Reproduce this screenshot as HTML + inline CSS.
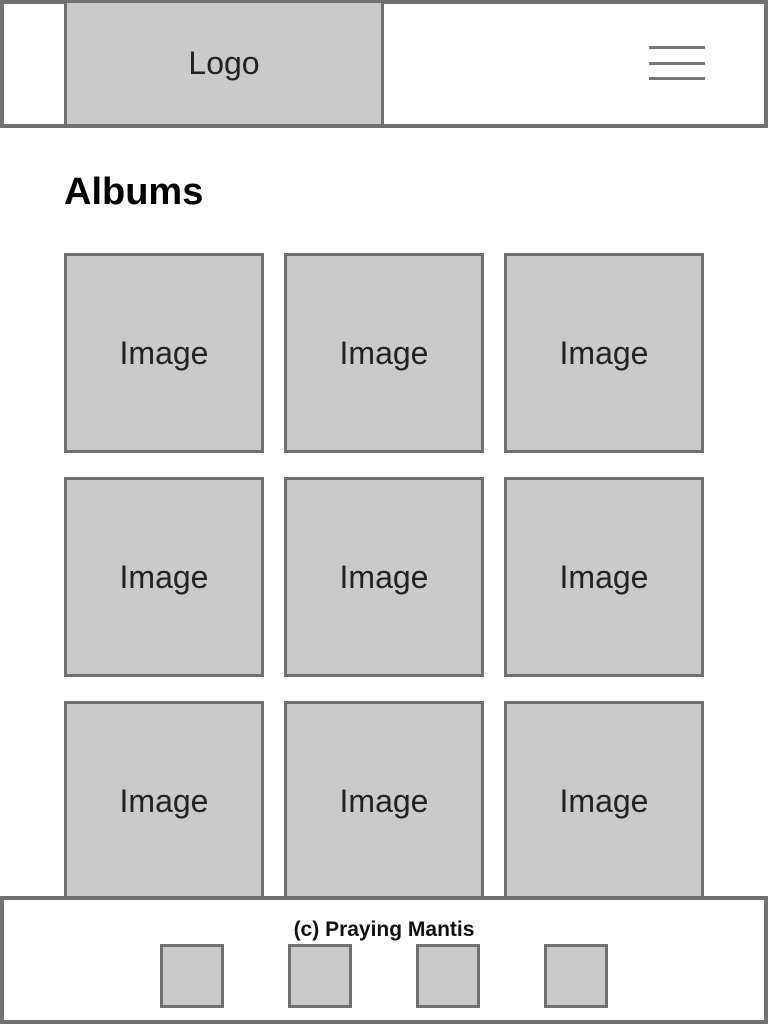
<!DOCTYPE html>
<html><head><style>
*{box-sizing:border-box;margin:0;padding:0}
body{width:768px;height:1024px;position:relative;background:#fff;font-family:"Liberation Sans",sans-serif;overflow:hidden}
.a{position:absolute}
.b{border:3px solid #707070;background:#cacaca}
.t{display:flex;align-items:center;justify-content:center;font-size:32px;color:#222}
.ln{position:absolute;left:649px;width:56px;height:3px;background:#777}
</style></head><body>
<div class="a" style="left:0;top:0;width:768px;height:128px;border:4px solid #707070"></div>
<div class="a b t" style="left:64px;top:0;width:320px;height:127px">Logo</div>
<div class="ln" style="top:46px"></div><div class="ln" style="top:62px"></div><div class="ln" style="top:77px"></div>
<div class="a" style="left:64px;top:171px;font-size:38px;font-weight:bold;color:#000">Albums</div>
<div class="a b t" style="left:64px;top:253px;width:200px;height:200px">Image</div>
<div class="a b t" style="left:284px;top:253px;width:200px;height:200px">Image</div>
<div class="a b t" style="left:504px;top:253px;width:200px;height:200px">Image</div>
<div class="a b t" style="left:64px;top:477px;width:200px;height:200px">Image</div>
<div class="a b t" style="left:284px;top:477px;width:200px;height:200px">Image</div>
<div class="a b t" style="left:504px;top:477px;width:200px;height:200px">Image</div>
<div class="a b t" style="left:64px;top:701px;width:200px;height:200px">Image</div>
<div class="a b t" style="left:284px;top:701px;width:200px;height:200px">Image</div>
<div class="a b t" style="left:504px;top:701px;width:200px;height:200px">Image</div>
<div class="a" style="left:0;top:896px;width:768px;height:128px;border:4px solid #707070;background:#fff"></div>
<div class="a" style="left:0;top:918px;width:768px;text-align:center;font-size:21px;font-weight:bold;color:#111">(c) Praying Mantis</div>
<div class="a b" style="left:160px;top:944px;width:64px;height:64px"></div>
<div class="a b" style="left:288px;top:944px;width:64px;height:64px"></div>
<div class="a b" style="left:416px;top:944px;width:64px;height:64px"></div>
<div class="a b" style="left:544px;top:944px;width:64px;height:64px"></div>
</body></html>
